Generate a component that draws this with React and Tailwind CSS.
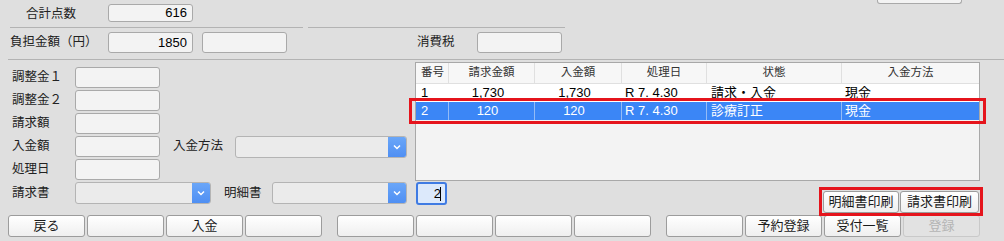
import React from 'react';

const font = { fontFamily: '"Liberation Sans", "Noto Sans CJK JP", sans-serif' };

const Field = ({ w = 'w-[85px]', h = 'h-[21px]', value = '' }) => (
    <div className={`${w} ${h} shrink-0 rounded-[3px] border border-[#a9a9a9] bg-[#f3f3f3] px-[5px] flex items-center justify-end text-[13px] text-black`}>
        {value}
    </div>
);

const Select = ({ w }) => (
    <div className={`${w} h-[22px] shrink-0 flex rounded-[3px] border border-[#b4b4b4] bg-[#ebebeb] overflow-hidden`}>
        <div className="flex-1" />
        <div className="w-[18px] bg-gradient-to-b from-[#6aa6f8] to-[#4f8ff3] flex items-center justify-center">
            <svg width="8" height="6" viewBox="0 0 8 6">
                <path d="M1 1.5 L4 4.5 L7 1.5" fill="none" stroke="white" strokeWidth="1.5" />
            </svg>
        </div>
    </div>
);

const Btn = ({ label = '', disabled = false, w = 'w-[77px]' }) => (
    <div
        className={`${w} h-[22px] shrink-0 rounded-[3px] border flex items-center justify-center text-[13px] ${
            disabled
                ? 'border-[#c9c9c9] bg-[#e2e2e2] text-[#b4b4b4]'
                : 'border-[#9c9c9c] bg-gradient-to-b from-white to-[#efefef] text-[#1a1a1a]'
        }`}
    >
        {label}
    </div>
);

const Label = ({ children, w }) => (
    <div className={`${w} shrink-0 text-[12.5px] text-[#222]`}>{children}</div>
);

const cols = ['w-[33px]', 'w-[86px]', 'w-[87px]', 'w-[85px]', 'w-[135px]', 'flex-1'];

const App = () => {
    const header = ['番号', '請求金額', '入金額', '処理日', '状態', '入金方法'];
    const row1 = ['1', '1,730', '1,730', 'R 7. 4.30', '請求・入金', '現金'];
    const row2 = ['2', '120', '120', 'R 7. 4.30', '診療訂正', '現金'];
    const align = ['justify-start pl-[5px]', 'justify-center pr-[8px]', 'justify-center pr-[8px]', 'justify-start pl-[3px]', 'justify-start pl-[4px]', 'justify-start pl-[3px]'];

    return (
        <div style={font} className="w-[1004px] h-[241px] bg-[#dfdfdf] overflow-hidden text-[#222]">
            {/* top row */}
            <div className="flex h-[27px]">
                <div className="w-[108px] pl-[26px] pt-[2px] flex items-center text-[12.5px]">合計点数</div>
                <div className="mt-[4px]">
                    <Field h="h-[18px]" value="616" />
                </div>
                <div className="ml-auto mr-[42px] w-[85px] h-[4px] rounded-b-[3px] border border-t-0 border-[#a9a9a9] bg-[#f3f3f3]" />
            </div>
            <div className="flex h-px">
                <div className="ml-[10px] w-[293px] bg-[#b3b3b3]" />
                <div className="ml-[5px] w-[257px] bg-[#b3b3b3]" />
            </div>

            {/* second row */}
            <div className="flex items-center h-[31px] pt-[4px] pb-[6px]">
                <Label w="w-[108px] pl-[10px]">負担金額（円）</Label>
                <Field value="1850" />
                <div className="ml-[9px]">
                    <Field />
                </div>
                <Label w="w-[60px] ml-[130px]">消費税</Label>
                <Field />
            </div>
            <div className="ml-[8px] h-px bg-[#b3b3b3]" />

            {/* main */}
            <div className="flex h-[155px]">
                <div className="w-[407px] pt-[7px] flex flex-col gap-[2px]">
                    <div className="flex items-center h-[21px]">
                        <Label w="w-[75px] pl-[12px]">調整金１</Label>
                        <Field />
                    </div>
                    <div className="flex items-center h-[21px]">
                        <Label w="w-[75px] pl-[12px]">調整金２</Label>
                        <Field />
                    </div>
                    <div className="flex items-center h-[21px]">
                        <Label w="w-[75px] pl-[12px]">請求額</Label>
                        <Field />
                    </div>
                    <div className="flex items-center h-[21px]">
                        <Label w="w-[75px] pl-[12px]">入金額</Label>
                        <Field />
                        <Label w="w-[62px] ml-[13px]">入金方法</Label>
                        <Select w="w-[172px]" />
                    </div>
                    <div className="flex items-center h-[21px]">
                        <Label w="w-[75px] pl-[12px]">処理日</Label>
                        <Field />
                    </div>
                    <div className="flex items-center h-[22px]">
                        <Label w="w-[75px] pl-[12px]">請求書</Label>
                        <Select w="w-[136px]" />
                        <Label w="w-[48px] ml-[13px]">明細書</Label>
                        <Select w="w-[135px]" />
                    </div>
                </div>

                <div className="ml-[8px] w-[565px] pt-[2px] flex flex-col">
                    {/* table */}
                    <div className="h-[119px] border border-[#a8a8a8] bg-[#f3f3f3] flex flex-col">
                        <div className="flex h-[21px] bg-[#f7f7f7] border-b border-[#e0e0e0]">
                            {header.map((h, i) => (
                                <div
                                    key={h}
                                    className={`${cols[i]} flex items-center ${i === 0 ? 'justify-start pl-[5px]' : 'justify-center'} text-[11.5px] text-[#333] ${i < 5 ? 'border-r border-[#e0e0e0]' : ''}`}
                                >
                                    {h}
                                </div>
                            ))}
                        </div>
                        <div className="flex h-[18px] bg-white">
                            {row1.map((c, i) => (
                                <div key={i} className={`${cols[i]} flex items-center ${align[i]} text-[13px] text-black`}>
                                    {c}
                                </div>
                            ))}
                        </div>
                        <div className="relative flex h-[18px] bg-[#3b86f6]">
                            {row2.map((c, i) => (
                                <div
                                    key={i}
                                    className={`${cols[i]} flex items-center ${align[i]} text-[13px] text-white ${i < 5 ? 'border-r border-[#94bbf6]' : ''}`}
                                >
                                    {c}
                                </div>
                            ))}
                            <div className="absolute -left-[7px] -right-[7px] -top-[4px] -bottom-[4px] border-[3px] border-[#e5141c]" />
                        </div>
                    </div>

                    <div className="flex">
                        <div className="ml-[1px] mt-[1px] w-[31px] h-[23px] rounded-[3px] border-2 border-[#3f7be3] bg-[#dce9fb] flex items-center justify-end pr-[4px] text-[13px] text-black">
                            2<span className="w-px h-[14px] bg-black ml-[-1px]" />
                        </div>
                        <div className="relative ml-auto mr-[1px] mt-[10px] flex gap-[1px]">
                            <Btn label="明細書印刷" w="w-[76px]" />
                            <Btn label="請求書印刷" w="w-[79px]" />
                            <div className="absolute -left-[4px] -right-[4px] -top-[4px] -bottom-[3px] border-[3px] border-[#e5141c]" />
                        </div>
                    </div>
                </div>
            </div>

            {/* bottom buttons */}
            <div className="flex">
                <div className="ml-[8px] flex gap-[2px]">
                    <Btn label="戻る" />
                    <Btn />
                    <Btn label="入金" />
                    <Btn />
                </div>
                <div className="ml-[15px] flex gap-[2px]">
                    <Btn />
                    <Btn />
                    <Btn />
                    <Btn />
                </div>
                <div className="ml-[15px] flex gap-[2px]">
                    <Btn />
                    <Btn label="予約登録" />
                    <Btn label="受付一覧" />
                    <Btn label="登録" disabled />
                </div>
            </div>
        </div>
    );
};

export default App;
